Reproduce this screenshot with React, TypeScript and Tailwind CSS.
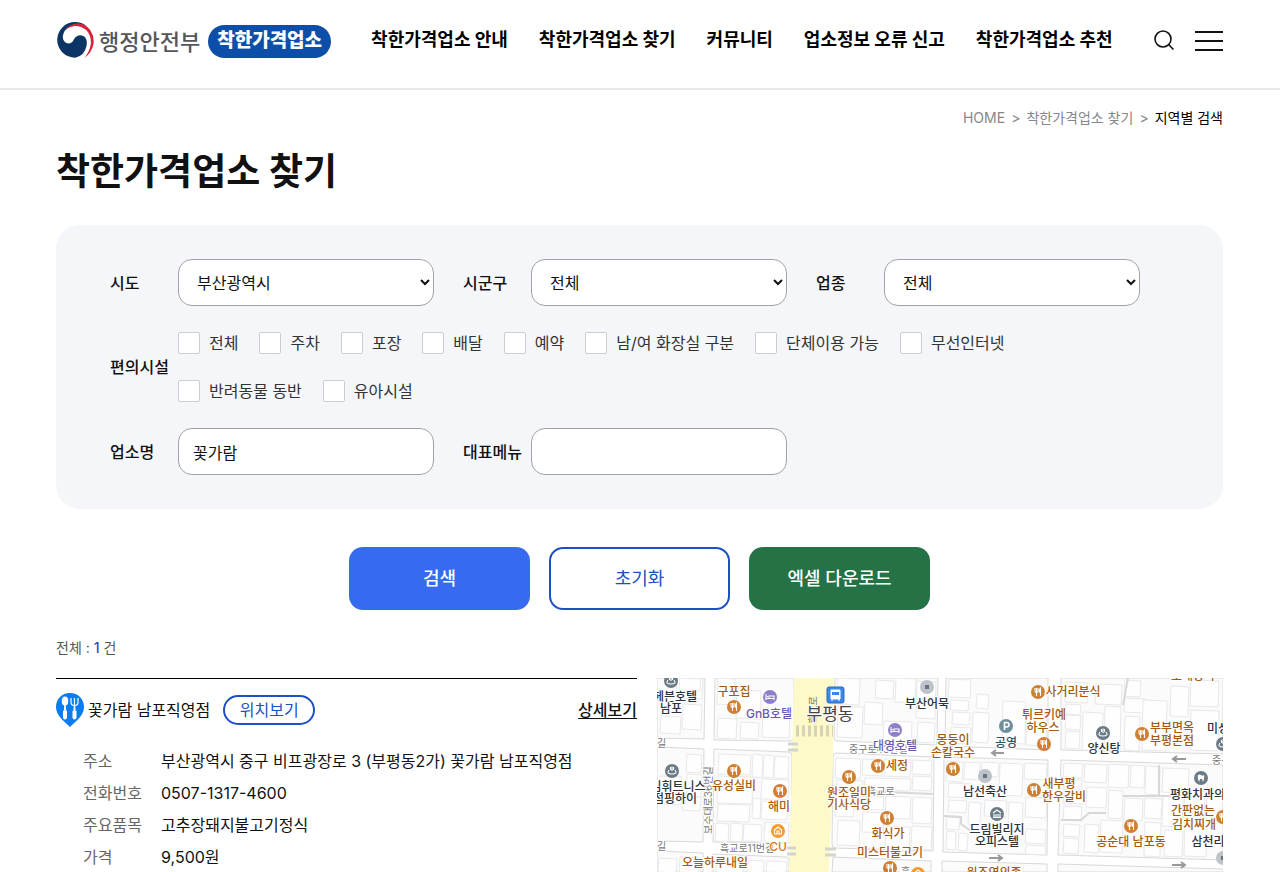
import React from 'react';

const NAV_ITEMS = ['착한가격업소 안내', '착한가격업소 찾기', '커뮤니티', '업소정보 오류 신고', '착한가격업소 추천'];

const FACILITIES = [
  '전체', '주차', '포장', '배달', '예약', '남/여 화장실 구분', '단체이용 가능', '무선인터넷', '반려동물 동반', '유아시설',
];

const STORE_ROWS = [
  { label: '주소', value: '부산광역시 중구 비프광장로 3 (부평동2가) 꽃가람 남포직영점' },
  { label: '전화번호', value: '0507-1317-4600' },
  { label: '주요품목', value: '고추장돼지불고기정식' },
  { label: '가격', value: '9,500원' },
];

const GovEmblem: React.FC = () => (
  <svg viewBox="0 0 110 108" className="h-9 w-[37px]" aria-hidden="true">
    <path d="M54 107A54 54 0 0 1 0 53A54 54 0 0 1 54 0Q74 0 88 12Q62 0 38 13Q20 24 17 42Q16 56 26 62Q38 68 46 59Q50 52 55 46Q66 35 80 43Q92 52 88 72Q82 102 54 107Z" fill="#0b3564" />
    <path d="M24 24Q36 6 62 4Q86 6 99 24Q112 44 109 66Q103 94 82 107Q97 90 101 66Q103 42 88 25Q73 12 53 12Q36 14 24 24Z" fill="#d9203a" />
  </svg>
);

const StorePin: React.FC = () => (
  <svg viewBox="0 0 28 34" className="h-[34px] w-7 shrink-0" aria-hidden="true">
    <path d="M14 0C6 0 0 6 0 14c0 9 9 15 14 20 5-5 14-11 14-20C28 6 22 0 14 0Z" fill="#087cf0" />
    <ellipse cx="9" cy="8" rx="3.300" ry="4.500" fill="#fff" />
    <path d="M8.300 11h1.400l.4 6H7.900zM7 18q2-2 4 0v7q-2 3-4 0zM16.500 18q2-2 4 0v7q-2 3-4 0zM17.800 12h1.400l.4 5h-2.200z" fill="#fff" />
    <path d="M15 5v4.500q0 3 3.500 3t3.500-3V5M18.500 5v8" fill="none" stroke="#fff" strokeWidth="1.200" />
  </svg>
);

interface FieldProps {
  id: string;
  label: string;
  children: React.ReactNode;
}

const Field: React.FC<FieldProps> = ({ id, label, children }) => (
  <div className="flex items-center">
    <label htmlFor={id} className="w-[68px] shrink-0 whitespace-nowrap font-medium">{label}</label>
    {children}
  </div>
);

const SelectField: React.FC<{ id: string; label: string; value: string }> = ({ id, label, value }) => (
  <Field id={id} label={label}>
    <select id={id} defaultValue={value} className="h-[47px] w-64 rounded-[14px] border border-[#a0a2a8] bg-white pl-3.5">
      <option>{value}</option>
    </select>
  </Field>
);

const TextField: React.FC<{ id: string; label: string; value: string }> = ({ id, label, value }) => (
  <Field id={id} label={label}>
    <input id={id} type="text" defaultValue={value} className="h-[47px] w-64 rounded-[14px] border border-[#a0a2a8] bg-white px-3.5" />
  </Field>
);

// city blocks between the roads
const BLOCKS = [
  'M656 678H704L703 739L656 738Z',
  'M714 678H793V738Q793 741 789 741L713 740Z',
  'M656 747L703 749L702 842L656 841Z',
  'M713 749L788 752Q791 752 791 756L790 840Q790 844 786 843L712 842Z',
  'M656 851L702 853V872H656Z',
  'M712 854L785 857Q788 857 788 860V872H712Z',
  'M834 678H937L936 745L836 741Q833 741 833 737Z',
  'M835 753L933 757L932 851L834 848Q831 848 831 844L832 757Q832 753 835 753Z',
  'M832 857L930 861V872H831Z',
  'M945 678H1047V750L944 746Z',
  'M943 757L1047 760L1046 855L942 852Z',
  'M941 861L1046 864V872H941Z',
  'M1060 678H1222V754L1060 750Z',
  'M1060 760L1222 765V860L1057 855Z',
  'M1057 864L1222 869V872H1057Z',
];

// building footprints: x, y, width, height
const BUILDINGS = [
  [676, 678, 26, 20], [660, 716, 20, 17], [682, 704, 19, 25], [679, 678, 21, 12],
  [717, 678, 17, 26], [736, 690, 24, 28], [717, 718, 19, 20], [740, 722, 18, 16], [762, 708, 27, 29],
  [686, 754, 15, 18], [686, 774, 15, 22], [659, 776, 22, 28], [682, 796, 18, 14],
  [718, 754, 32, 20], [752, 754, 10, 23], [763, 755, 10, 22], [774, 756, 14, 22],
  [717, 776, 35, 27], [717, 804, 32, 17], [752, 798, 8, 20], [761, 779, 27, 20], [761, 801, 26, 18],
  [715, 823, 13, 18], [730, 823, 12, 18], [743, 824, 18, 17], [764, 822, 24, 20],
  [658, 858, 18, 14], [679, 857, 20, 15], [716, 859, 27, 13], [747, 860, 16, 12], [766, 861, 20, 11],
  [837, 678, 22, 26], [837, 706, 25, 31], [875, 680, 18, 18], [895, 678, 20, 24], [883, 721, 28, 20],
  [916, 681, 19, 37], [864, 702, 18, 22], [917, 722, 17, 20],
  [835, 758, 25, 20], [862, 759, 20, 16], [884, 759, 26, 17], [912, 760, 19, 14], [912, 776, 19, 14],
  [836, 780, 26, 10], [864, 778, 46, 12], [835, 796, 18, 20], [855, 796, 28, 13], [885, 796, 25, 22],
  [912, 797, 19, 26], [837, 820, 22, 25], [862, 812, 21, 20], [885, 826, 24, 24], [911, 826, 20, 23],
  [948, 679, 22, 18], [950, 700, 18, 10], [952, 712, 17, 12], [972, 712, 16, 30], [976, 694, 12, 14],
  [1002, 701, 23, 42], [1026, 711, 20, 34], [950, 727, 20, 16],
  [946, 761, 16, 20], [964, 762, 15, 17], [981, 762, 17, 14], [999, 763, 23, 32], [1024, 763, 22, 16],
  [948, 783, 22, 14], [948, 800, 18, 12], [968, 802, 12, 22], [984, 800, 22, 16], [1008, 802, 14, 28],
  [946, 817, 13, 12], [946, 831, 9, 18], [958, 833, 9, 17], [1025, 797, 21, 20], [1025, 829, 20, 14], [1025, 845, 20, 9],
  [1065, 682, 22, 20], [1065, 704, 15, 10], [1065, 715, 15, 14], [1065, 731, 14, 17], [1082, 712, 20, 38],
  [1095, 684, 26, 20], [1104, 706, 16, 44], [1124, 680, 16, 16], [1124, 698, 20, 14], [1124, 716, 15, 34],
  [1142, 700, 24, 50], [1170, 686, 18, 30], [1190, 680, 28, 26], [1190, 710, 28, 40],
  [1063, 763, 19, 14], [1084, 764, 22, 18], [1108, 764, 20, 23], [1130, 765, 14, 22], [1145, 766, 14, 28],
  [1063, 779, 18, 10], [1063, 791, 20, 12], [1063, 806, 18, 14], [1063, 824, 16, 12], [1063, 838, 15, 15],
  [1086, 787, 20, 20], [1108, 790, 14, 28], [1124, 798, 18, 22], [1144, 798, 17, 20], [1084, 824, 14, 28],
  [1100, 820, 22, 32], [1144, 822, 16, 34], [1162, 796, 20, 30], [1184, 790, 20, 26], [1164, 830, 18, 26],
  [1184, 820, 22, 36], [1162, 768, 26, 24], [1206, 790, 16, 30],
];

type PoiKind = 'food' | 'hotel' | 'shop' | 'spa' | 'parking' | 'cafe' | 'building' | 'dental';

const POI_FILL: Record<PoiKind, string> = {
  food: '#d08032',
  hotel: '#8f7fc9',
  shop: '#bdc3c9',
  spa: '#6c7c86',
  parking: '#6e909d',
  cafe: '#f29b30',
  building: '#6c7c86',
  dental: '#6c7c86',
};

const POI_GLYPH: Record<PoiKind, React.ReactNode> = {
  food: <path d="M-3-4V-1Q-3 .5-1.500 .5T0-1V-4M-1.500-4V4M2.500 4V-4Q1.300-3 1.300 0H2.500" />,
  hotel: <path d="M-4-3V3M-4 1.500H4V3M4 1V-1H-1V1M-2.500-1V0" />,
  shop: <path d="M-2-2H2V2H-2Z" fill="#6d737a" stroke="none" />,
  spa: <path d="M-1.500-4V-1M0-4.500V0M1.500-4V-1M-3-1Q-6 3 0 3T3-1" />,
  parking: <path d="M-1.500 4V-3.500H.5Q3-3.500 3-1.300T.5 1H-1.500" strokeWidth="1.600" />,
  cafe: <path d="M-3.500-1L0-4L3.500-1V3H-3.500ZM-1 3V0H1V3" />,
  building: <path d="M-4-1L0-4L4-1M-3 0V3M-1 0V3M1 0V3M3 0V3M-4 3.500H4" />,
  dental: <path d="M-3-3Q-1.500-4 0-3T3-3Q4 0 2 4L1 1H-1L-2 4Q-4 0-3-3Z" fill="#fff" stroke="none" />,
};

const POIS: { kind: PoiKind; x: number; y: number }[] = [
  { kind: 'spa', x: 670, y: 681 },
  { kind: 'food', x: 733, y: 707 },
  { kind: 'hotel', x: 769, y: 697 },
  { kind: 'spa', x: 671, y: 771 },
  { kind: 'food', x: 733, y: 771 },
  { kind: 'food', x: 779, y: 791 },
  { kind: 'cafe', x: 777, y: 831 },
  { kind: 'shop', x: 926, y: 687 },
  { kind: 'hotel', x: 894, y: 730 },
  { kind: 'food', x: 877, y: 766 },
  { kind: 'food', x: 848, y: 777 },
  { kind: 'food', x: 886, y: 818 },
  { kind: 'food', x: 889, y: 868 },
  { kind: 'cafe', x: 917, y: 874 },
  { kind: 'food', x: 952, y: 769 },
  { kind: 'shop', x: 984, y: 776 },
  { kind: 'parking', x: 1005, y: 726 },
  { kind: 'building', x: 996, y: 814 },
  { kind: 'food', x: 1037, y: 692 },
  { kind: 'food', x: 1043, y: 744 },
  { kind: 'food', x: 1033, y: 790 },
  { kind: 'spa', x: 1102, y: 733 },
  { kind: 'food', x: 1141, y: 734 },
  { kind: 'dental', x: 1200, y: 778 },
  { kind: 'food', x: 1130, y: 826 },
  { kind: 'food', x: 1222, y: 817 },
  { kind: 'spa', x: 1222, y: 744 },
  { kind: 'shop', x: 1222, y: 858 },
];

const BROWN = '#a45a0e';
const DARK = '#2c3238';
const PURPLE = '#6a58b0';

const MAP_LABELS: { text: string; x: number; y: number; color: string }[] = [
  { text: '헤븐호텔', x: 674, y: 701, color: DARK },
  { text: '남포', x: 670, y: 713, color: DARK },
  { text: '구포집', x: 733, y: 696, color: BROWN },
  { text: 'GnB호텔', x: 768, y: 718, color: PURPLE },
  { text: '김휘트니스', x: 677, y: 791, color: DARK },
  { text: '점핑하이', x: 674, y: 803, color: DARK },
  { text: '유성실비', x: 733, y: 790, color: BROWN },
  { text: '해미', x: 778, y: 811, color: BROWN },
  { text: 'CU', x: 777, y: 851, color: '#d0781e' },
  { text: '오늘하루내일', x: 714, y: 867, color: BROWN },
  { text: '부산어묵', x: 926, y: 708, color: DARK },
  { text: '대영호텔', x: 894, y: 750, color: PURPLE },
  { text: '세정', x: 896, y: 770, color: BROWN },
  { text: '원조일미', x: 848, y: 797, color: BROWN },
  { text: '기사식당', x: 848, y: 809, color: BROWN },
  { text: '화식가', x: 887, y: 838, color: BROWN },
  { text: '미스터불고기', x: 889, y: 857, color: BROWN },
  { text: '몽둥이', x: 952, y: 744, color: BROWN },
  { text: '손칼국수', x: 952, y: 757, color: BROWN },
  { text: '공영', x: 1005, y: 747, color: '#2d5563' },
  { text: '남선축산', x: 984, y: 796, color: DARK },
  { text: '드림빌리지', x: 996, y: 834, color: DARK },
  { text: '오피스텔', x: 996, y: 846, color: DARK },
  { text: '원조연의족', x: 993, y: 877, color: BROWN },
  { text: '사거리분식', x: 1072, y: 696, color: BROWN },
  { text: '튀르키예', x: 1043, y: 719, color: BROWN },
  { text: '하우스', x: 1042, y: 732, color: BROWN },
  { text: '양신탕', x: 1103, y: 753, color: DARK },
  { text: '부부면옥', x: 1171, y: 732, color: BROWN },
  { text: '부평본점', x: 1171, y: 745, color: BROWN },
  { text: '미성', x: 1217, y: 733, color: DARK },
  { text: '새부평', x: 1058, y: 788, color: BROWN },
  { text: '한우갈비', x: 1063, y: 801, color: BROWN },
  { text: '평화치과의원', x: 1202, y: 799, color: DARK },
  { text: '간판없는', x: 1192, y: 815, color: BROWN },
  { text: '김치찌개', x: 1193, y: 829, color: BROWN },
  { text: '공순대 남포동', x: 1130, y: 846, color: BROWN },
  { text: '삼천리', x: 1207, y: 846, color: DARK },
  { text: '포대창녹', x: 1192, y: 680, color: BROWN },
];

const StoreMap: React.FC = () => (
  <svg
    viewBox="656 678 566 194"
    preserveAspectRatio="xMinYMin slice"
    role="img"
    aria-label="업소 위치 지도"
    className="h-[194px] w-full"
  >
    <rect x="656" y="678" width="566" height="194" fill="#fff" />
    <g fill="#fbfbfb" stroke="#d8d8da" strokeWidth="1">
      {BLOCKS.map((d) => <path key={d} d={d} />)}
    </g>
    <g fill="#fefefe" stroke="#e8e8ea" strokeWidth="1">
      {BUILDINGS.map(([x, y, w, h]) => <path key={`${x}-${y}`} d={`M${x} ${y}l${w} 1l-1 ${h}l-${w} -1z`} />)}
    </g>
    <path d="M831 790L933 794M943 816L960 817V824L970 831M1060 820H1080L1088 813H1105M1122 796H1185M1122 705L1127 678M1158 796V765" fill="none" stroke="#d8d8da" strokeWidth="2" />

    {/* main road with crossings */}
    <path d="M793 678H833L832 762L828 872H788L791 762Z" fill="#fdf9c9" />
    <path d="M795 731H832" stroke="#d6d3b4" strokeWidth="11" strokeDasharray="3 3" />
    <path d="M787 744H797M787 750H797M824 849H835M824 855H835M786 848H795M786 854H795" stroke="#d4d4ce" strokeWidth="3" />
    <path d="M1003 753H991M995 750L991 753L995 756M1185 759H1172M1176 756L1172 759L1176 762M988 858H1001M997 855L1001 858L997 861M1171 865H1184M1180 862L1184 865L1180 868" fill="none" stroke="#999" strokeWidth="2" />

    {/* street names */}
    <g fontSize="10" fill="#777" stroke="#fff" strokeWidth="2" paintOrder="stroke">
      <text x="656" y="747">길</text>
      <text x="656" y="850">길</text>
      <text x="719" y="852">흑교로11번길</text>
      <text x="848" y="753">중구로43번길</text>
      <text x="866" y="795">흑교로</text>
      <text x="1211" y="764">중구</text>
      <text x="900" y="875">흑</text>
      <text transform="translate(711 834) rotate(-90)">보수대로36번길</text>
      <text transform="translate(816 724) rotate(-90)" stroke="#fdf9c9">흑교로</text>
    </g>

    {POIS.map(({ kind, x, y }) => (
      <g key={`${kind}-${x}-${y}`} transform={`translate(${x} ${y})`}>
        <circle r="7" fill={POI_FILL[kind]} />
        <g fill="none" stroke="#fff" strokeWidth="1.100">{POI_GLYPH[kind]}</g>
      </g>
    ))}

    <g fontSize="12" fontWeight="500" textAnchor="middle" stroke="#fff" strokeWidth="2" paintOrder="stroke">
      {MAP_LABELS.map(({ text, x, y, color }) => (
        <text key={`${text}-${x}`} x={x} y={y} fill={color}>{text}</text>
      ))}
    </g>
    <text x="829" y="720" fontSize="17" textAnchor="middle" fill="#444" stroke="#fff" strokeWidth="2" paintOrder="stroke">부평동</text>

    {/* bus stop */}
    <rect x="826" y="687" width="17" height="16" rx="2" fill="#3b86e6" stroke="#2a6ac2" />
    <path d="M830 690H839V699H830ZM831 699V701M838 699V701" fill="#fff" stroke="#fff" />
    <path d="M831 692H838V695H831Z" fill="#3b86e6" />
  </svg>
);

const Header: React.FC = () => (
  <header className="flex h-[90px] items-center border-b-2 border-[#e9e9e9] pr-[57px] pb-2 pl-[57px]">
    <a href="#home" className="flex shrink-0 items-end">
      <GovEmblem />
      <span className="ml-[5px] text-[22px] leading-8 font-medium text-[#55565a]">행정안전부</span>
      <span className="ml-2 flex h-[33px] items-center rounded-full bg-[#0d4fa8] px-[9px] text-[19px] font-black text-white">
        착한가격업소
      </span>
    </a>
    <nav className="ml-10 flex gap-[31px] text-lg font-bold whitespace-nowrap text-black">
      {NAV_ITEMS.map((item) => <a key={item} href="#menu">{item}</a>)}
    </nav>
    <div className="ml-auto flex items-center gap-5">
      <button type="button" aria-label="검색 열기">
        <svg viewBox="0 0 22 22" className="size-[22px]" fill="none" stroke="#111" strokeWidth="1.600">
          <circle cx="10" cy="10" r="8" />
          <path d="M15.500 15.500L20.500 20.500" />
        </svg>
      </button>
      <button type="button" aria-label="전체 메뉴">
        <svg viewBox="0 0 28 22" className="h-[22px] w-7" stroke="#111" strokeWidth="2">
          <path d="M0 3H28M0 12H28M0 21H28" />
        </svg>
      </button>
    </div>
  </header>
);

const SearchForm: React.FC = () => (
  <form onSubmit={(e) => e.preventDefault()}>
    <div className="flex flex-col gap-[25px] rounded-3xl bg-[#f4f6fa] px-[54px] py-[34px] text-base leading-6">
      <div className="flex flex-wrap gap-x-[29px] gap-y-4">
        <SelectField id="sido" label="시도" value="부산광역시" />
        <SelectField id="sigungu" label="시군구" value="전체" />
        <SelectField id="category" label="업종" value="전체" />
      </div>
      <div role="group" aria-labelledby="facility-label" className="flex items-center">
        <span id="facility-label" className="w-[68px] shrink-0 font-medium whitespace-nowrap">편의시설</span>
        <div className="flex max-w-[900px] flex-wrap gap-x-[21px] gap-y-6">
          {FACILITIES.map((name) => (
            <label key={name} className="flex items-center gap-[9px] text-[#333]">
              <input type="checkbox" className="size-[22px] appearance-none rounded-[2px] border border-[#cccdd0] bg-white checked:bg-[#366bf0]" />
              {name}
            </label>
          ))}
        </div>
      </div>
      <div className="flex flex-wrap gap-x-[29px] gap-y-4">
        <TextField id="store-name" label="업소명" value="꽃가람" />
        <TextField id="menu-name" label="대표메뉴" value="" />
      </div>
    </div>
    <div className="mt-[38px] flex justify-center gap-[19px] text-lg">
      <button type="submit" className="h-[63px] w-[181px] rounded-[14px] bg-[#366bf0] font-medium text-white">검색</button>
      <button type="reset" className="h-[63px] w-[181px] rounded-[14px] border-2 border-[#1c50c4] bg-white text-[#1c50c4]">초기화</button>
      <button type="button" className="h-[63px] w-[181px] rounded-[14px] bg-[#247245] font-medium text-white">엑셀 다운로드</button>
    </div>
  </form>
);

const StoreCard: React.FC = () => (
  <article className="border-t border-black pt-3.5">
    <div className="flex items-center">
      <StorePin />
      <h2 className="ml-1 text-base">꽃가람 남포직영점</h2>
      <button type="button" className="ml-[13px] h-[30px] w-[92px] rounded-full border-2 border-[#1c50c4] leading-6 text-[#1c50c4]">
        위치보기
      </button>
      <a href="#detail" className="ml-auto font-medium underline underline-offset-2">상세보기</a>
    </div>
    <dl className="mt-[22px] ml-[27px] flex flex-col gap-2 leading-6">
      {STORE_ROWS.map((row) => (
        <div key={row.label} className="flex">
          <dt className="w-[78px] shrink-0 text-[#666]">{row.label}</dt>
          <dd className="text-[#111]">{row.value}</dd>
        </div>
      ))}
    </dl>
  </article>
);

const App: React.FC = () => (
  <div className="bg-white font-[Inter,'Noto_Sans_CJK_KR',sans-serif] text-base text-[#111]">
    <Header />
    <main className="pr-[57px] pl-14">
      <nav aria-label="현재 위치" className="flex justify-end gap-1.5 pt-[18px] text-sm leading-5 text-[#85878c]">
        <a href="#home">HOME</a>
        <span>&gt;</span>
        <a href="#find">착한가격업소 찾기</a>
        <span>&gt;</span>
        <span className="text-black">지역별 검색</span>
      </nav>
      <h1 className="mt-5 mb-[29px] text-[37px] leading-[48px] font-bold">착한가격업소 찾기</h1>
      <SearchForm />
      <p className="mt-[27px] mb-[19px] text-sm leading-[22px] text-[#555]">
        전체 : <strong className="font-medium text-[#1c50c4]">1</strong> 건
      </p>
      <section className="grid grid-cols-[581fr_566fr] gap-5">
        <StoreCard />
        <StoreMap />
      </section>
    </main>
  </div>
);

export default App;
